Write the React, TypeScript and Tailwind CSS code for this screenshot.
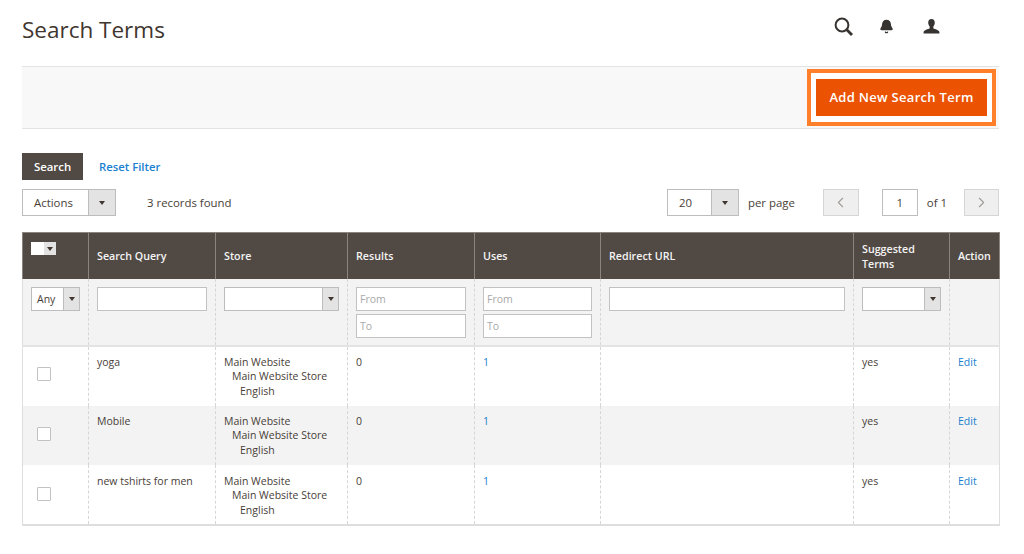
import { Bell, ChevronLeft, ChevronRight } from "lucide-react";

const rows = [
  { query: "yoga", bg: "bg-white", height: "h-[60px]", textPad: "pt-[8px]", boxPad: "pb-[4px]" },
  { query: "Mobile", bg: "bg-[#f3f3f3]", height: "h-[59px]", textPad: "pt-[8px]", boxPad: "pb-[3px]" },
  { query: "new tshirts for men", bg: "bg-white", height: "h-[60px]", textPad: "pt-[9px]", boxPad: "pb-[1px]" },
];

const headCell = "border-x border-[#8a837e] px-2 pt-[2px] align-middle text-left text-[10.7px] font-semibold leading-[15px] text-[#f4f4f4]";
const filterCell = "border-x border-dashed border-[#d6d6d6] px-2 pt-[8px] align-top";
const bodyCell = "border-x border-dashed border-[#d6d6d6] px-2 align-top text-[10.5px] leading-[14.5px]";
const field = "block h-[24px] w-full border border-[#c2c2c2] bg-white px-[3px] text-[10.5px] leading-[22px] text-[#a9a9a9]";

function Caret({ className = "" }: { className?: string }) {
  return <span className={`block h-0 w-0 border-x-[3.5px] border-t-[4px] border-x-transparent border-t-[#41362f] ${className}`} />;
}

function SelectBox({ label, width, arrow, height, textClass }: { label?: string; width: string; arrow: string; height: string; textClass: string }) {
  return (
    <div className={`flex border border-[#bdbdbd] bg-white ${width} ${height}`}>
      <span className={`flex-1 truncate ${textClass}`}>{label}</span>
      <span className={`flex items-center justify-center border-l border-[#bdbdbd] bg-[#e3e3e3] ${arrow}`}>
        <Caret />
      </span>
    </div>
  );
}

export default function App() {
  return (
    <div className="h-[554px] w-[1024px] overflow-hidden bg-white font-['Open_Sans',sans-serif] text-[#483e37]">
      <div className="flex h-[66px] items-start justify-between pl-[22px] pr-[84px]">
        <h1 className="mt-[13px] text-[22.5px] leading-[34px] font-normal text-[#41362f]">Search Terms</h1>
        <div className="mt-[17px] flex items-center">
          <svg width="19" height="19" viewBox="0 0 19 19" fill="none" stroke="#373330">
            <circle cx="8" cy="8" r="6.4" strokeWidth="2" />
            <path d="M12.800 12.800L18 18" strokeWidth="2.800" />
          </svg>
          <Bell size={15} fill="#373330" strokeWidth={2} className="ml-[26px] text-[#373330]" />
          <svg width="17" height="16" viewBox="0 0 17 16" className="ml-[29px]">
            <path
              d="M8.5 0C6.3 0 5.2 1.5 5.2 3.6c0 1.7.7 3.2 1.5 4.1v1.5C5 10.3 1 10.8.6 13v1.4h15.8V13c-.4-2.2-4.400-2.700-6.100-3.800V7.700c.8-.9 1.500-2.400 1.500-4.100C11.800 1.500 10.700 0 8.500 0z"
              fill="#373330"
            />
          </svg>
        </div>
      </div>

      <div className="mx-[22px] flex h-[63px] w-[977px] items-center justify-end border-y border-[#e3e3e3] bg-[#f8f8f8] pr-[3px]">
        <div className="border-4 border-[#ff7f2a] bg-white px-[5px] py-[6px]">
          <button className="block h-[37px] w-[171px] bg-[#eb5202] text-center text-[13px] leading-[37px] font-semibold tracking-[0.3px] text-white">
            Add New Search Term
          </button>
        </div>
      </div>

      <div className="mx-[22px] mt-[24px] flex items-center">
        <button className="h-[27px] w-[61px] bg-[#514943] text-center text-[11.4px] leading-[27px] font-semibold text-white">Search</button>
        <a className="ml-[16px] mt-[1px] text-[11.3px] font-semibold text-[#1a7fd0]">Reset Filter</a>
      </div>

      <div className="mx-[22px] mt-[9px] flex h-[27px] w-[977px] items-center text-[11.4px]">
        <SelectBox label="Actions" width="w-[94px]" height="h-[27px]" arrow="w-[27px]" textClass="pl-[11px] leading-[25px]" />
        <span className="ml-[31px]">3 records found</span>
        <div className="ml-auto flex items-center">
          <SelectBox label="20" width="w-[72px]" height="h-[27px]" arrow="w-[27px]" textClass="pl-[11px] leading-[25px]" />
          <span className="ml-[9px]">per page</span>
          <span className="ml-[28px] flex h-[27px] w-[36px] items-center justify-center border border-[#d6d6d6] bg-[#efefef]">
            <ChevronLeft size={17} strokeWidth={1.6} className="text-[#a39d98]" />
          </span>
          <span className="ml-[23px] h-[27px] w-[36px] border border-[#bdbdbd] bg-white text-center leading-[25px]">1</span>
          <span className="ml-[9px]">of 1</span>
          <span className="ml-[17px] flex h-[27px] w-[35px] items-center justify-center border border-[#d6d6d6] bg-[#efefef]">
            <ChevronRight size={17} strokeWidth={1.6} className="text-[#a39d98]" />
          </span>
        </div>
      </div>

      <table className="mx-[22px] mt-[16px] w-[977px] table-fixed border-collapse border-x border-b-2 border-[#dedede]">
        <colgroup>
          <col className="w-[66px]" />
          <col className="w-[127px]" />
          <col className="w-[132px]" />
          <col className="w-[127px]" />
          <col className="w-[126px]" />
          <col className="w-[253px]" />
          <col className="w-[96px]" />
          <col className="w-[50px]" />
        </colgroup>
        <thead>
          <tr className="h-[46px] border-t border-[#8a837e] bg-[#514943]">
            <th className={`${headCell} align-top`}>
              <div className="mt-[7px] flex h-[13px] w-[25px]">
                <span className="h-[13px] w-[13px] bg-white" />
                <span className="flex flex-1 items-center justify-center bg-[#e3e3e3]">
                  <Caret />
                </span>
              </div>
            </th>
            <th className={headCell}>Search Query</th>
            <th className={headCell}>Store</th>
            <th className={headCell}>Results</th>
            <th className={headCell}>Uses</th>
            <th className={headCell}>Redirect URL</th>
            <th className={headCell}>
              Suggested
              <br />
              Terms
            </th>
            <th className={headCell}>Action</th>
          </tr>
        </thead>
        <tbody>
          <tr className="h-[67px] border-b-2 border-[#e3e3e3] bg-[#f3f3f3]">
            <td className={filterCell}>
              <SelectBox label="Any" width="w-[49px]" height="h-[24px]" arrow="w-[16px]" textClass="pl-[5px] text-[10.5px] leading-[22px]" />
            </td>
            <td className={filterCell}>
              <div className={field} />
            </td>
            <td className={filterCell}>
              <SelectBox width="w-[115px]" height="h-[24px]" arrow="w-[16px]" textClass="" />
            </td>
            <td className={filterCell}>
              <div className={field}>From</div>
              <div className={`${field} mt-[3px]`}>To</div>
            </td>
            <td className={filterCell}>
              <div className={field}>From</div>
              <div className={`${field} mt-[3px]`}>To</div>
            </td>
            <td className={filterCell}>
              <div className={field} />
            </td>
            <td className={filterCell}>
              <SelectBox width="w-[79px]" height="h-[24px]" arrow="w-[16px]" textClass="" />
            </td>
            <td className={filterCell} />
          </tr>
          {rows.map((row) => (
            <tr key={row.query} className={`${row.height} ${row.bg}`}>
              <td className={`border-x border-dashed border-[#d6d6d6] px-2 align-middle ${row.boxPad}`}>
                <span className="ml-[6px] block h-[14px] w-[14px] rounded-[1px] border border-[#c2c2c2] bg-white" />
              </td>
              <td className={`${bodyCell} ${row.textPad}`}>{row.query}</td>
              <td className={`${bodyCell} ${row.textPad}`}>
                Main Website
                <div className="pl-[8px]">Main Website Store</div>
                <div className="pl-[16px]">English</div>
              </td>
              <td className={`${bodyCell} ${row.textPad}`}>0</td>
              <td className={`${bodyCell} ${row.textPad} text-[#1a7fd0]`}>1</td>
              <td className={`${bodyCell} ${row.textPad}`} />
              <td className={`${bodyCell} ${row.textPad}`}>yes</td>
              <td className={`${bodyCell} ${row.textPad} text-[#1a7fd0]`}>Edit</td>
            </tr>
          ))}
        </tbody>
      </table>
    </div>
  );
}
